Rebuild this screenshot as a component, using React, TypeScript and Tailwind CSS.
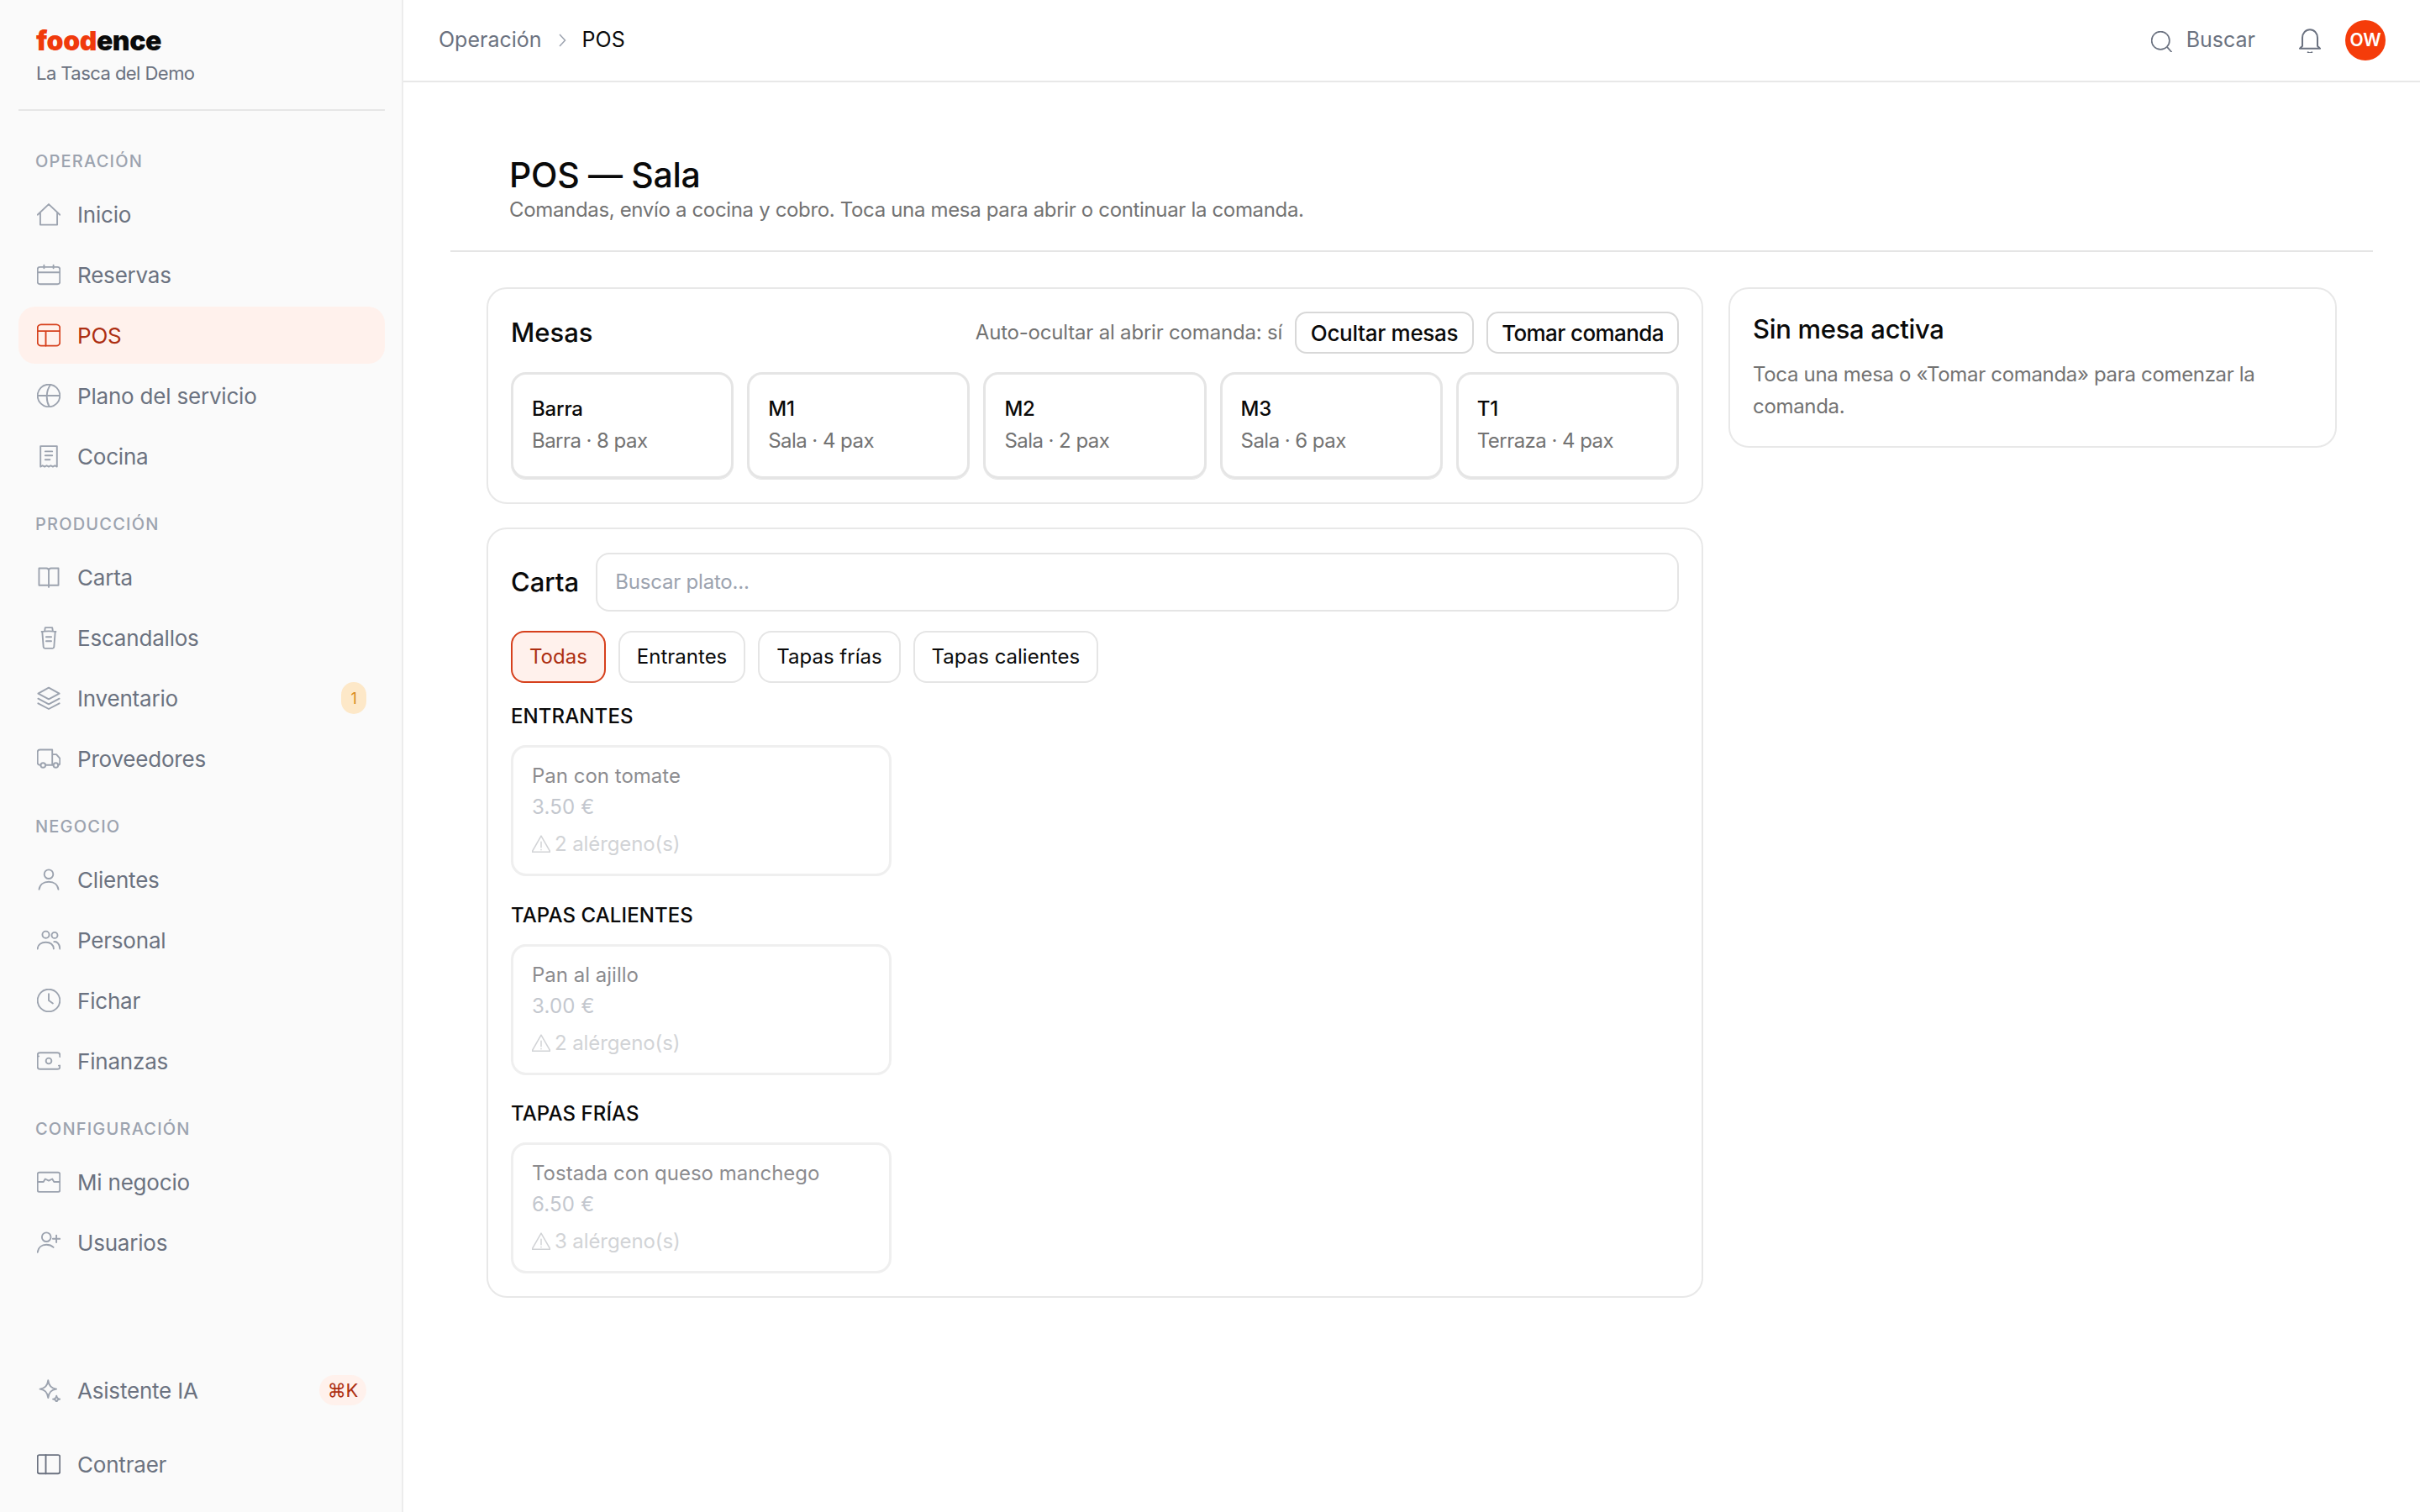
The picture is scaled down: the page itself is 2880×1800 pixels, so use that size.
import type { ReactNode } from "react";

const Svg = ({ size = 28, className = "", children }: { size?: number; className?: string; children: ReactNode }) => (
  <svg
    width={size}
    height={size}
    viewBox="2 2 20 20"
    fill="none"
    stroke="currentColor"
    strokeWidth={1.35}
    strokeLinecap="round"
    strokeLinejoin="round"
    className={`shrink-0 ${className}`}
  >
    {children}
  </svg>
);

const icons: Record<string, ReactNode> = {
  home: <path d="M2.5 12.5 12 3.5l9.5 9M4.8 10.5V21h14.4V10.5" />,
  calendar: (
    <>
      <rect x="2.5" y="5.5" width="19" height="14.5" rx="2" />
      <path d="M2.5 10h19M8 4v2.5M16 4v2.5" />
    </>
  ),
  pos: (
    <>
      <rect x="2.5" y="3" width="19" height="18" rx="3" />
      <path d="M2.5 8.5h19M9.5 8.5V21" />
    </>
  ),
  globe: (
    <>
      <circle cx="12" cy="12" r="9.5" />
      <path d="M2.5 12h19M13.5 2.7C9.5 8 9.5 16 12.5 21.4" />
    </>
  ),
  receipt: <path d="M5 3.5h14V21l-1.75-1-1.75 1-1.75-1-1.75 1-1.75-1-1.75 1-1.75-1L5 21zM9 8h6M9 11.5h6M9 15h4" />,
  book: <path d="M3.75 4.5H10c1.2 0 2 .8 2 2v14M20.25 4.5H14c-1.2 0-2 .8-2 2M3.75 4.5V19H12M20.25 4.5V19H12" />,
  cup: (
    <>
      <path d="M6.5 7 7.5 20c.1.7.5 1.2 1.2 1.2h6.6c.7 0 1.1-.5 1.2-1.2l1-13" />
      <path d="M6 7c2-.6 10-.6 12 0M8.5 6.5 9 3.5h6l.5 3M9.8 11.5h4.4M9.8 15h4.4" />
    </>
  ),
  layers: <path d="M12 3.2 21 8.2 12 13 3 8.2zM3 12.5 12 17.3l9-4.8M3 16.5 12 21.3l9-4.8" />,
  truck: (
    <>
      <path d="M5 17.5H4.500c-1.2 0-2-.8-2-2V6.500c0-1.2.8-2 2-2H15v13H9.500M15 8.500h3.500l3 3.500v4c0 1-.6 1.500-1.500 1.500M15 17.500h1" />
      <circle cx="7.2" cy="17.7" r="2" />
      <circle cx="18" cy="17.7" r="2" />
    </>
  ),
  user: (
    <>
      <circle cx="12" cy="7.5" r="3.8" />
      <path d="M3.8 20.5c.5-4 3.7-6.500 8.200-6.500s7.700 2.500 8.200 6.500" />
    </>
  ),
  users: (
    <>
      <circle cx="9.5" cy="7.5" r="2.9" />
      <circle cx="17" cy="8" r="2.5" />
      <path d="M2.5 19.500c.3-3.500 3.200-5.500 7-5.500s6.400 2 6.700 5.500M16.500 13.500c2.800-.3 4.800 2 5 6" />
    </>
  ),
  clock: (
    <>
      <circle cx="12" cy="12" r="9.5" />
      <path d="M12 6.5V12l3.500 2.500" />
    </>
  ),
  cash: (
    <>
      <path d="M21.5 8.500V7c0-1.2-.8-2-2-2h-15c-1.2 0-2 .8-2 2v10c0 1.2.8 2 2 2h15c1.2 0 2-.8 2-2v-1" />
      <circle cx="12" cy="12" r="2.4" />
      <path d="M2.5 8h1M20.500 16h1" />
    </>
  ),
  inbox: (
    <>
      <rect x="2.5" y="4" width="19" height="16.5" rx="1.5" />
      <path d="M2.5 12h5l1.500-2.500 3 1.500 3-1.500 1.500 2.500h5" />
    </>
  ),
  userPlus: (
    <>
      <circle cx="10" cy="7.5" r="3.8" />
      <path d="M2.5 20.500c.5-4 3.500-6.500 7.500-6.500 2.500 0 4.500.8 6 2.200M18.500 6v6M15.500 9h6" />
    </>
  ),
  sparkles: (
    <>
      <path d="M11.5 3.500c.5 4.500 2.500 7 7 7.500-4.500.5-6.500 3-7 7.500-.5-4.500-2.500-7-7-7.500 4.500-.5 6.500-3 7-7.500z" />
      <path d="M18.6 16.700c.2 1.800 1.100 2.700 3 2.900-1.900.2-2.800 1.100-3 2.900-.2-1.800-1.100-2.700-3-2.900 1.900-.2 2.800-1.100 3-2.900z" />
    </>
  ),
  panel: (
    <>
      <rect x="2.5" y="4.2" width="19" height="15.8" rx="1.5" />
      <path d="M9.5 4.200V20" />
    </>
  ),
};

type NavEntry = { label: string; icon: string; active?: boolean; badge?: string };

const sections: { title: string; items: NavEntry[] }[] = [
  {
    title: "Operación",
    items: [
      { label: "Inicio", icon: "home" },
      { label: "Reservas", icon: "calendar" },
      { label: "POS", icon: "pos", active: true },
      { label: "Plano del servicio", icon: "globe" },
      { label: "Cocina", icon: "receipt" },
    ],
  },
  {
    title: "Producción",
    items: [
      { label: "Carta", icon: "book" },
      { label: "Escandallos", icon: "cup" },
      { label: "Inventario", icon: "layers", badge: "1" },
      { label: "Proveedores", icon: "truck" },
    ],
  },
  {
    title: "Negocio",
    items: [
      { label: "Clientes", icon: "user" },
      { label: "Personal", icon: "users" },
      { label: "Fichar", icon: "clock" },
      { label: "Finanzas", icon: "cash" },
    ],
  },
  {
    title: "Configuración",
    items: [
      { label: "Mi negocio", icon: "inbox" },
      { label: "Usuarios", icon: "userPlus" },
    ],
  },
];

const tables = [
  { name: "Barra", info: "Barra · 8 pax" },
  { name: "M1", info: "Sala · 4 pax" },
  { name: "M2", info: "Sala · 2 pax" },
  { name: "M3", info: "Sala · 6 pax" },
  { name: "T1", info: "Terraza · 4 pax" },
];

const dishes = [
  { section: "Entrantes", name: "Pan con tomate", price: "3.50 €", allergens: "2 alérgeno(s)" },
  { section: "Tapas calientes", name: "Pan al ajillo", price: "3.00 €", allergens: "2 alérgeno(s)" },
  { section: "Tapas frías", name: "Tostada con queso manchego", price: "6.50 €", allergens: "3 alérgeno(s)" },
];

function NavRow({ item }: { item: NavEntry }) {
  return (
    <div
      className={`flex h-[68px] items-center gap-[20px] rounded-[20px] pl-[22px] pr-[22px] text-[26px] tracking-[-0.2px] ${
        item.active ? "bg-[#fff1ec] text-[#ad2f12]" : "text-[#6b7280]"
      }`}
    >
      <Svg className={item.active ? "text-[#d6401c]" : "text-[#9ca3af]"}>{icons[item.icon]}</Svg>
      <span className="flex-1">{item.label}</span>
      {item.badge && (
        <span className="flex h-[38px] w-[30px] items-center justify-center rounded-full bg-[#fde8c8] text-[18px] text-[#d98a1a]">
          {item.badge}
        </span>
      )}
    </div>
  );
}

function Sidebar() {
  return (
    <aside className="flex h-full w-[480px] shrink-0 flex-col border-r-2 border-[#ececec] bg-[#fafafa]">
      <div className="mr-[20px] ml-[22px] h-[132px] border-b-2 border-[#e6e6e6] pl-[21px] pt-[30px]">
        <div className="text-[32px] leading-[38px] font-black tracking-[-0.45px] text-[#0a0a0a]">
          <span className="text-[#f03a0c]">food</span>ence
        </div>
        <div className="mt-[5px] text-[22px] leading-[28px] tracking-[-0.55px] text-[#6b7280]">La Tasca del Demo</div>
      </div>
      <nav className="mr-[20px] ml-[22px] mt-[46px] flex flex-col gap-[33px]">
        {sections.map((section) => (
          <div key={section.title}>
            <div className="mb-[15px] pl-[20px] text-[20px] leading-[28px] font-medium tracking-[1.2px] text-[#9ca3af] uppercase">
              {section.title}
            </div>
            <div className="flex flex-col gap-[4px]">
              {section.items.map((item) => (
                <NavRow key={item.label} item={item} />
              ))}
            </div>
          </div>
        ))}
      </nav>
      <div className="mr-[20px] ml-[22px] mt-auto mb-[23px] flex flex-col gap-[20px]">
        <div className="flex h-[68px] items-center gap-[20px] pl-[22px] pr-[22px] text-[26px] tracking-[-0.2px] text-[#6b7280]">
          <Svg className="text-[#9ca3af]">{icons.sparkles}</Svg>
          <span className="flex-1">Asistente IA</span>
          <span className="flex h-[36px] w-[56px] items-center justify-center rounded-full bg-[#fff1ec] text-[22px] text-[#ad2f12]">⌘K</span>
        </div>
        <div className="flex h-[68px] items-center gap-[20px] pl-[22px] text-[26px] tracking-[-0.2px] text-[#6b7280]">
          <Svg className="text-[#6b7280]">{icons.panel}</Svg>
          <span>Contraer</span>
        </div>
      </div>
    </aside>
  );
}

function Topbar() {
  return (
    <header className="flex h-[98px] shrink-0 items-center border-b-2 border-[#e8e8e8] pb-[1px] pl-[42px] pr-[41px] text-[25px]">
      <span className="text-[#6b7280]">Operación</span>
      <svg width="24" height="24" viewBox="0 0 24 24" fill="none" stroke="#9ca3af" strokeWidth={1.5} className="mx-[12px]">
        <path d="m9 5 6.5 7L9 19" />
      </svg>
      <span className="text-[#0a0a0a]">POS</span>
      <div className="ml-auto flex items-center text-[#6b7280]">
        <Svg size={25} className="mt-[3px] text-[#6b7280]">
          <circle cx="11" cy="11" r="8.5" />
          <path d="m17.5 17.5 4 4.5" />
        </Svg>
        <span className="ml-[17px]">Buscar</span>
        <Svg size={30} className="ml-[50px] text-[#6b7280]">
          <path d="M6 16.5V10c0-3.5 2.5-6.5 6-6.5s6 3 6 6.5v6.5l2 2H4zM10.5 21.5c.5.8 2.5.8 3 0" />
        </Svg>
        <span className="ml-[27px] flex h-[48px] w-[48px] items-center justify-center rounded-full bg-[#f53c0a] text-[21px] font-semibold text-white">
          OW
        </span>
      </div>
    </header>
  );
}

function Card({ className = "", children }: { className?: string; children: ReactNode }) {
  return <section className={`rounded-[24px] border-2 border-[#e8e8e8] bg-white px-[27px] ${className}`}>{children}</section>;
}

function TablesCard() {
  return (
    <Card className="pt-[27px] pb-[28px]">
      <div className="flex h-[50px] items-center">
        <h2 className="flex-1 text-[31px] font-medium text-[#0a0a0a]">Mesas</h2>
        <span className="text-[24px] tracking-[-0.2px] text-[#737373]">Auto-ocultar al abrir comanda: sí</span>
        <button className="ml-[15px] h-[50px] w-[213px] rounded-[14px] border-2 border-[#d8d8d8] text-[26px] font-medium tracking-[-0.3px] text-[#0a0a0a]">Ocultar mesas</button>
        <button className="ml-[15px] h-[50px] w-[229px] rounded-[14px] border-2 border-[#d8d8d8] text-[26px] font-medium tracking-[-0.6px] text-[#0a0a0a]">Tomar comanda</button>
      </div>
      <div className="mt-[22px] grid grid-cols-5 gap-[16px]">
        {tables.map((t) => (
          <button key={t.name} className="h-[127px] rounded-[18px] border-[3px] border-[#e5e5e5] pb-[2px] pl-[22px] text-left shadow-[0_1px_0_#e5e5e5]">
            <div className="text-[24px] leading-[36px] font-medium tracking-[-0.2px] text-[#0a0a0a]">{t.name}</div>
            <div className="mt-[2px] text-[24px] leading-[36px] tracking-[-0.55px] text-[#737373]">{t.info}</div>
          </button>
        ))}
      </div>
    </Card>
  );
}

function MenuCard() {
  const filters = ["Todas", "Entrantes", "Tapas frías", "Tapas calientes"];
  return (
    <Card className="h-[917px] pt-[28px]">
      <div className="flex items-center gap-[20px]">
        <h2 className="text-[31px] font-medium text-[#0a0a0a]">Carta</h2>
        <div className="flex h-[70px] flex-1 items-center rounded-[16px] border-2 border-[#e5e5e5] pl-[21px] text-[24px] tracking-[-0.2px] text-[#9ca3af]">Buscar plato...</div>
      </div>
      <div className="mt-[23px] flex gap-[15px]">
        {filters.map((f, i) => (
          <button
            key={f}
            className={`h-[62px] rounded-[16px] border-2 px-[20px] text-[24px] ${
              i === 0 ? "border-[#d6401c] bg-[#fff1ec] text-[#ad2f12]" : "border-[#e5e5e5] text-[#0a0a0a]"
            }`}
          >
            {f}
          </button>
        ))}
      </div>
      <div className="mt-[22px] flex flex-col gap-[28.5px]">
        {dishes.map((d) => (
          <div key={d.section}>
            <div className="text-[24px] leading-[36px] font-medium tracking-[0.1px] text-[#0a0a0a] uppercase">{d.section}</div>
            <div className="mt-[16px] grid grid-cols-3 gap-[16px]">
              <div className="h-[156px] rounded-[18px] border-[3px] border-[#e5e5e5] pl-[22px] pt-[16px] opacity-60">
                <div className="text-[24px] leading-[36px] text-[#3f3f46]">{d.name}</div>
                <div className="text-[24px] leading-[38px] tracking-[0.2px] text-[#9ca3af]">{d.price}</div>
                <div className="mt-[7px] flex items-center gap-[5px] text-[24px] leading-[36px] tracking-[-0.1px] text-[#b4b7bc]">
                  <Svg size={22}>
                    <path d="M12 3 22 20.5H2zM12 9.5v6M12 18v.2" />
                  </Svg>
                  {d.allergens}
                </div>
              </div>
            </div>
          </div>
        ))}
      </div>
    </Card>
  );
}

export default function App() {
  return (
    <div className="flex h-screen w-full overflow-hidden bg-white font-['Inter',sans-serif]">
      <Sidebar />
      <main className="flex min-w-0 flex-1 flex-col">
        <Topbar />
        <div className="mx-[56px] border-b-2 border-[#e5e5e5] pt-[84px] pb-[32px] pl-[70px]">
          <h1 className="text-[41px] leading-[52px] font-medium tracking-[-0.3px] text-[#0a0a0a]">POS — Sala</h1>
          <p className="text-[24px] leading-[32px] tracking-[-0.34px] text-[#737373]">Comandas, envío a cocina y cobro. Toca una mesa para abrir o continuar la comanda.</p>
        </div>
        <div className="mx-[99px] mt-[42px] grid grid-cols-[2fr_1fr] gap-[30px]">
          <div className="flex flex-col gap-[28px]">
            <TablesCard />
            <MenuCard />
          </div>
          <Card className="self-start pt-[28px] pb-[28px]">
            <h2 className="text-[31px] leading-[40px] font-medium tracking-[-0.3px] text-[#0a0a0a]">Sin mesa activa</h2>
            <p className="mt-[15px] text-[24px] leading-[38px] tracking-[-0.33px] text-[#737373]">Toca una mesa o «Tomar comanda» para comenzar la comanda.</p>
          </Card>
        </div>
      </main>
    </div>
  );
}
